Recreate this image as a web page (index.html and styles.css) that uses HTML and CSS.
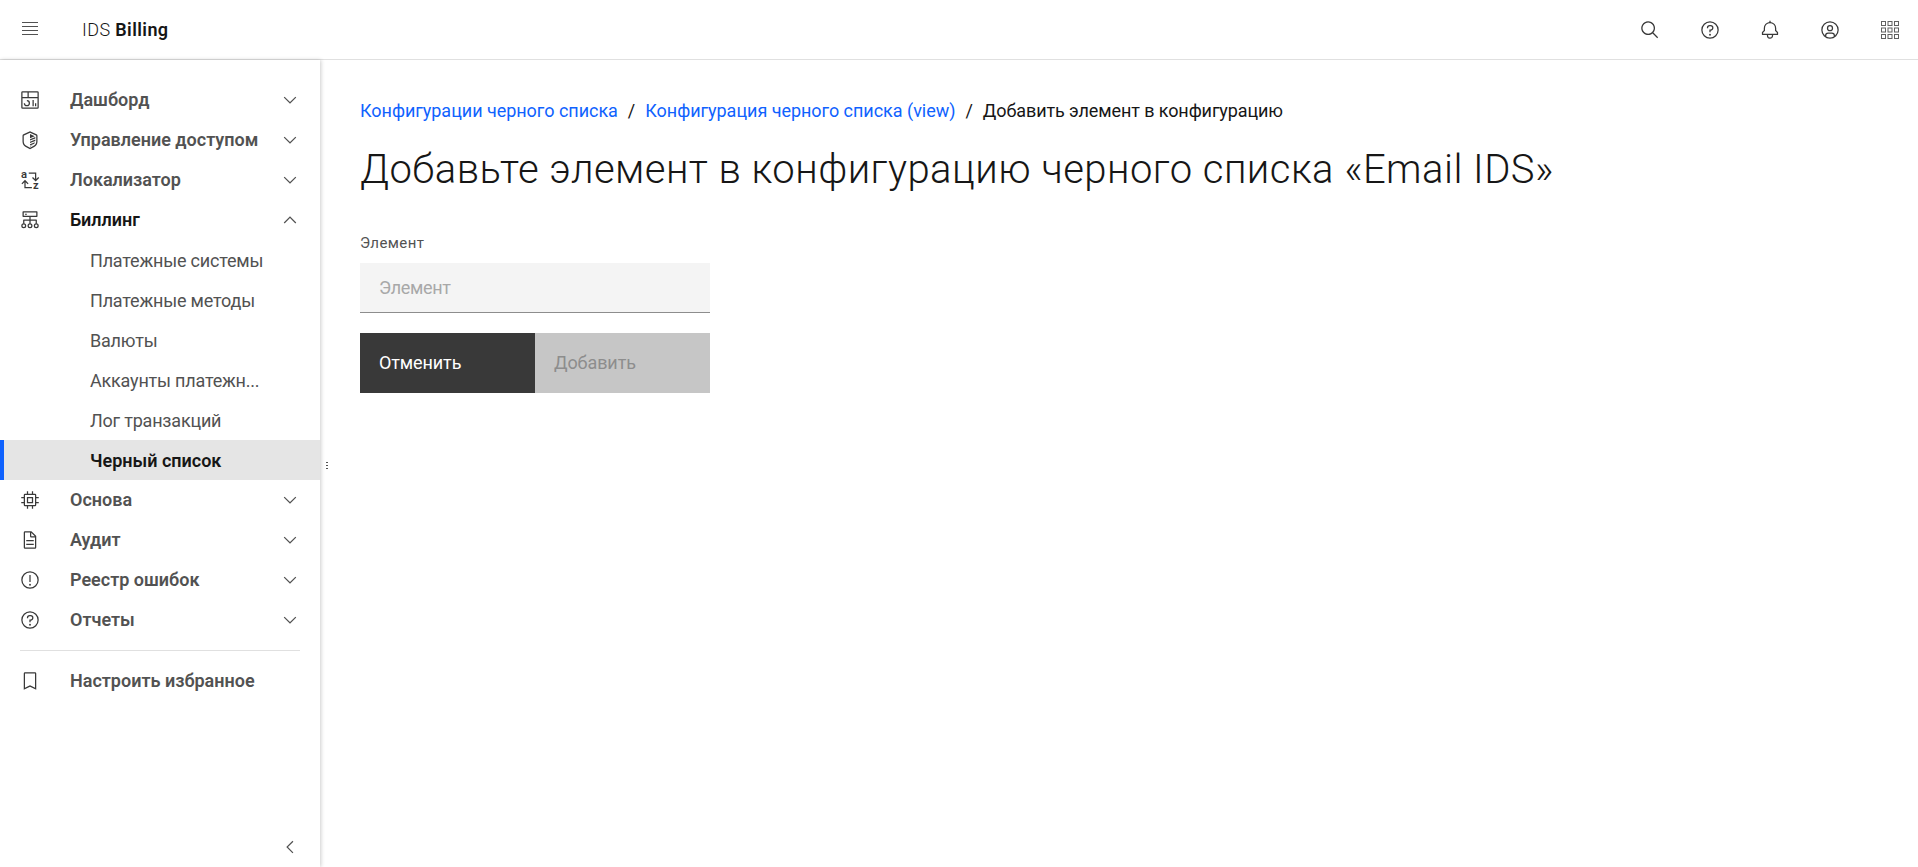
FILE: index.html
```html
<!DOCTYPE html>
<html lang="en">
<head>
    <meta charset="UTF-8">
    <meta name="viewport" content="width=device-width, initial-scale=1.0">
    <title>IDS Billing</title>
    <link rel="stylesheet" href="styles.css">
</head>
<body>
    <!-- Top bar -->
    <header class="topbar">
        <button class="icon-btn menu-btn">
            <svg viewBox="0 0 32 32" class="icon icon-muted"><path d="M3.2 3.200h25.600v1.600H3.200zM3.200 9.600h25.600v1.600H3.200zM3.200 16h25.600v1.600H3.200zM3.200 22.400h25.600V24H3.200z"/></svg>
        </button>
        <div class="logo">IDS <b>Billing</b></div>
        <div class="topbar-actions">
            <button class="icon-btn"><svg viewBox="0 0 32 32" class="icon"><path d="M29,27.5859l-7.5521-7.5521a11.0177,11.0177,0,1,0-1.4141,1.4141L27.5859,29ZM4,13a9,9,0,1,1,9,9A9.01,9.01,0,0,1,4,13Z"/></svg></button>
            <button class="icon-btn"><svg viewBox="0 0 32 32" class="icon"><path d="M16,2A14,14,0,1,0,30,16,14,14,0,0,0,16,2Zm0,26A12,12,0,1,1,28,16,12,12,0,0,1,16,28Z"/><circle cx="16" cy="23.5" r="1.5"/><path d="M17,8H15.5A4.49,4.49,0,0,0,11,12.5V13h2v-.5A2.5,2.5,0,0,1,15.5,10H17a2.5,2.5,0,0,1,0,5H15v4.5h2V17a4.5,4.5,0,0,0,0-9Z"/></svg></button>
            <button class="icon-btn"><svg viewBox="0 0 32 32" class="icon"><path d="M28.7071,19.293,26,16.5859V13a10.0136,10.0136,0,0,0-9-9.9492V1H15V3.0508A10.0136,10.0136,0,0,0,6,13v3.5859L3.2929,19.293A1,1,0,0,0,3,20v3a1,1,0,0,0,1,1h7v.7768a5.152,5.152,0,0,0,4.5,5.1987A5.0057,5.0057,0,0,0,21,25V24h7a1,1,0,0,0,1-1V20A1,1,0,0,0,28.7071,19.293ZM19,25a3,3,0,0,1-6,0V24h6Zm8-3H5V20.4141L7.707,17.707A1,1,0,0,0,8,17V13a8,8,0,0,1,16,0v4a1,1,0,0,0,.293.707L27,20.4141Z"/></svg></button>
            <button class="icon-btn"><svg viewBox="0 0 32 32" class="icon"><path d="M16,8a5,5,0,1,0,5,5A5,5,0,0,0,16,8Zm0,8a3,3,0,1,1,3-3A3.0034,3.0034,0,0,1,16,16Z"/><path d="M16,2A14,14,0,1,0,30,16,14.0158,14.0158,0,0,0,16,2ZM10,26.3765V25a3.0033,3.0033,0,0,1,3-3h6a3.0033,3.0033,0,0,1,3,3v1.3765a11.8989,11.8989,0,0,1-12,0Zm13.9925-1.4507A5.0016,5.0016,0,0,0,19,20H13a5.0016,5.0016,0,0,0-4.9925,4.9258,12,12,0,1,1,15.985,0Z"/></svg></button>
            <button class="icon-btn"><svg viewBox="0 0 20 20" class="icon switcher"><rect x="1.500" y="1.500" width="4" height="4"/><rect x="8" y="1.500" width="4" height="4"/><rect x="14.500" y="1.500" width="4" height="4"/><rect x="1.500" y="8" width="4" height="4"/><rect x="8" y="8" width="4" height="4"/><rect x="14.500" y="8" width="4" height="4"/><rect x="1.500" y="14.500" width="4" height="4"/><rect x="8" y="14.500" width="4" height="4"/><rect x="14.500" y="14.500" width="4" height="4"/></svg></button>
        </div>
    </header>

    <div class="layout">
        <!-- Side navigation -->
        <aside class="sidebar">
            <nav class="nav">
                <a class="nav-item">
                    <svg viewBox="0 0 32 32" class="icon"><path d="M24 21h2v5h-2zM20 16h2v10h-2zM11 26a5.0059 5.0059 0 01-5-5H8a3 3 0 103-3V16a5 5 0 010 10z"/><path d="M28,2H4A2.002,2.002,0,0,0,2,4V28a2.0023,2.0023,0,0,0,2,2H28a2.0027,2.0027,0,0,0,2-2V4A2.0023,2.0023,0,0,0,28,2Zm0,9H14V4H28ZM12,4v7H4V4ZM4,28V13H28.0007l.0013,15Z"/></svg>
                    <span class="nav-label">Дашборд</span>
                    <svg viewBox="0 0 32 32" class="chevron"><path d="M16 22L6 12l1.4-1.4 8.6 8.6 8.6-8.6L26 12z"/></svg>
                </a>
                <a class="nav-item">
                    <svg viewBox="0 0 32 32" class="icon"><path d="M16 30.600l-6.800-3.600C5.800 25.200 4 22 4 18.200V9c0-1 .6-1.800 1.500-2.200L16 2l10.500 4.800c.9.4 1.500 1.200 1.500 2.200v9.200c0 3.800-1.800 7-5.200 8.800zM16 4.200L6.400 8.600c-.3.100-.4.300-.4.500v9.100c0 3 1.400 5.600 4.200 7L16 28.300l5.800-3.100c2.800-1.400 4.200-4 4.200-7V9.100c0-.2-.1-.4-.4-.5z"/><path d="M16 6.500l7.500 3.400-7.500 3.100zM16 14.800l8.500-3.500v2.100L16 16.900zM16 18.800l8.500-3.500v2.100L16 20.900zM16 22.800l7.800-3.200-.9 2.300-6.900 2.900zM16 26l4.500-1.900L16 26.800z"/></svg>
                    <span class="nav-label">Управление доступом</span>
                    <svg viewBox="0 0 32 32" class="chevron"><path d="M16 22L6 12l1.4-1.4 8.6 8.6 8.6-8.6L26 12z"/></svg>
                </a>
                <a class="nav-item">
                    <svg viewBox="0 0 32 32" class="icon icon-locale"><text x="1.600" y="13" class="icon-letter">a</text><text x="20.800" y="30.400" class="icon-letter">z</text><path d="M14 4h12v10.500l3.300-3.300 1.400 1.400L25 18.300l-5.700-5.700 1.400-1.400 3.300 3.300V6H14zM19 29H7V19.500l-3.300 3.300-1.400-1.400L8 15.700l5.700 5.700-1.400 1.400L9 19.500V27h10z"/></svg>
                    <span class="nav-label">Локализатор</span>
                    <svg viewBox="0 0 32 32" class="chevron"><path d="M16 22L6 12l1.4-1.4 8.6 8.6 8.6-8.6L26 12z"/></svg>
                </a>
                <a class="nav-item nav-open">
                    <svg viewBox="0 0 32 32" class="icon"><path d="M5 2h22a1 1 0 0 1 1 1v7a1 1 0 0 1-1 1H17v4h9a1 1 0 0 1 1 1v6h-2v-5h-8v5h-2v-5H7v5H5v-6a1 1 0 0 1 1-1h9v-4H5a1 1 0 0 1-1-1V3a1 1 0 0 1 1-1zm1 2v5h20V4zM8 6h3v1.500H8z" fill-rule="evenodd"/><path d="M6 21a4 4 0 1 1 0 8 4 4 0 0 1 0-8zm0 2a2 2 0 1 0 0 4 2 2 0 0 0 0-4zM16 21a4 4 0 1 1 0 8 4 4 0 0 1 0-8zm0 2a2 2 0 1 0 0 4 2 2 0 0 0 0-4zM26 21a4 4 0 1 1 0 8 4 4 0 0 1 0-8zm0 2a2 2 0 1 0 0 4 2 2 0 0 0 0-4z"/></svg>
                    <span class="nav-label">Биллинг</span>
                    <svg viewBox="0 0 32 32" class="chevron"><path d="M16 10l10 10-1.400 1.400L16 12.800l-8.600 8.600L6 20z"/></svg>
                </a>
                <a class="nav-sub">Платежные системы</a>
                <a class="nav-sub">Платежные методы</a>
                <a class="nav-sub">Валюты</a>
                <a class="nav-sub">Аккаунты платежн...</a>
                <a class="nav-sub">Лог транзакций</a>
                <a class="nav-sub nav-active">Черный список</a>
                <a class="nav-item">
                    <svg viewBox="0 0 32 32" class="icon"><path d="M11,11V21H21V11Zm8,8H13V13h6Z"/><path d="M30,13V11H26V8a2,2,0,0,0-2-2H21V2H19V6H13V2H11V6H8A2,2,0,0,0,6,8v3H2v2H6v6H2v2H6v3a2,2,0,0,0,2,2h3v4h2V26h6v4h2V26h3a2,2,0,0,0,2-2V21h4V19H26V13ZM24,24H8V8H24Z"/></svg>
                    <span class="nav-label">Основа</span>
                    <svg viewBox="0 0 32 32" class="chevron"><path d="M16 22L6 12l1.4-1.4 8.6 8.6 8.6-8.6L26 12z"/></svg>
                </a>
                <a class="nav-item">
                    <svg viewBox="0 0 32 32" class="icon"><path d="M25.7,9.3l-7-7A.9087.9087,0,0,0,18,2H8A2.0058,2.0058,0,0,0,6,4V28a2.0058,2.0058,0,0,0,2,2H24a2.0058,2.0058,0,0,0,2-2V10A.9092.9092,0,0,0,25.7,9.3ZM18,4.4,23.6,10H18ZM24,28H8V4h8v6a2.0058,2.0058,0,0,0,2,2h6Z"/><path d="M10 22H22V24H10zM10 16H22V18H10z"/></svg>
                    <span class="nav-label">Аудит</span>
                    <svg viewBox="0 0 32 32" class="chevron"><path d="M16 22L6 12l1.4-1.4 8.6 8.6 8.6-8.6L26 12z"/></svg>
                </a>
                <a class="nav-item">
                    <svg viewBox="0 0 32 32" class="icon"><path d="M16,2A14,14,0,1,0,30,16,14,14,0,0,0,16,2Zm0,26A12,12,0,1,1,28,16,12,12,0,0,1,16,28Z"/><path d="M15 8H17V19H15z"/><path d="M16,22a1.5,1.5,0,1,0,1.5,1.5A1.5,1.5,0,0,0,16,22Z"/></svg>
                    <span class="nav-label">Реестр ошибок</span>
                    <svg viewBox="0 0 32 32" class="chevron"><path d="M16 22L6 12l1.4-1.4 8.6 8.6 8.6-8.6L26 12z"/></svg>
                </a>
                <a class="nav-item">
                    <svg viewBox="0 0 32 32" class="icon"><path d="M16,2A14,14,0,1,0,30,16,14,14,0,0,0,16,2Zm0,26A12,12,0,1,1,28,16,12,12,0,0,1,16,28Z"/><circle cx="16" cy="23.5" r="1.5"/><path d="M17,8H15.5A4.49,4.49,0,0,0,11,12.5V13h2v-.5A2.5,2.5,0,0,1,15.5,10H17a2.5,2.5,0,0,1,0,5H15v4.5h2V17a4.5,4.5,0,0,0,0-9Z"/></svg>
                    <span class="nav-label">Отчеты</span>
                    <svg viewBox="0 0 32 32" class="chevron"><path d="M16 22L6 12l1.4-1.4 8.6 8.6 8.6-8.6L26 12z"/></svg>
                </a>
                <div class="nav-divider"></div>
                <a class="nav-item">
                    <svg viewBox="0 0 32 32" class="icon"><path d="M24,4V26.75l-7.1-3.59-.9-.45-.9.45L8,26.75V4H24m0-2H8A2,2,0,0,0,6,4V30l10-5,10,5V4a2,2,0,0,0-2-2Z"/></svg>
                    <span class="nav-label">Настроить избранное</span>
                </a>
            </nav>
            <button class="collapse-btn">
                <svg viewBox="0 0 32 32" class="chevron"><path d="M10 16L20 6l1.400 1.400L12.800 16l8.600 8.600L20 26z"/></svg>
            </button>
            <span class="resize-handle"></span>
        </aside>

        <!-- Main content -->
        <main class="content">
            <div class="breadcrumb">
                <a>Конфигурации черного списка</a>
                <span class="crumb-sep">/</span>
                <a>Конфигурация черного списка (view)</a>
                <span class="crumb-sep">/</span>
                <span class="crumb-current">Добавить элемент в конфигурацию</span>
            </div>
            <h1>Добавьте элемент в конфигурацию черного списка «Email IDS»</h1>
            <form class="form">
                <label class="field-label" for="element">Элемент</label>
                <input class="field-input" id="element" type="text" placeholder="Элемент">
                <div class="form-buttons">
                    <button type="button" class="btn btn-cancel"><span class="btn-text">Отменить</span></button>
                    <button type="button" class="btn btn-add" disabled><span class="btn-text">Добавить</span></button>
                </div>
            </form>
        </main>
    </div>
</body>
</html>
```

FILE: styles.css
```css
* {
    box-sizing: border-box;
}

body {
    font-family: "Roboto", "Noto Sans", sans-serif;
    margin: 0;
    padding: 0;
    background-color: #fff;
    color: #161616;
}

button {
    font-family: inherit;
    border: none;
    background: none;
    padding: 0;
}

/* Top bar */
.topbar {
    height: 60px;
    display: flex;
    align-items: center;
    border-bottom: 1px solid #e0e0e0;
    padding-left: 20px;
    padding-right: 8px;
}

.icon-btn {
    width: 20px;
    height: 20px;
    display: block;
}

.menu-btn {
    margin-right: 42px;
}

.logo {
    font-size: 18px;
    font-weight: 300;
    letter-spacing: 0.4px;
    color: #161616;
}

.logo b {
    font-weight: 600;
}

.topbar-actions {
    margin-left: auto;
    display: flex;
    gap: 40px;
    padding-right: 10px;
}

.icon {
    width: 20px;
    height: 20px;
    fill: #393939;
    flex-shrink: 0;
    display: block;
}

.icon-muted {
    fill: #525252;
}

.icon-locale {
    overflow: visible;
}

.switcher {
    fill: none;
    stroke: #616161;
}

.icon-letter {
    font-size: 18px;
    font-family: "Roboto", sans-serif;
}

.chevron {
    width: 20px;
    height: 20px;
    fill: #525252;
    flex-shrink: 0;
    display: block;
}

.layout {
    display: flex;
    height: 807px;
}

/* Side navigation */
.sidebar {
    position: relative;
    width: 320px;
    flex-shrink: 0;
    display: flex;
    flex-direction: column;
    box-shadow: 1px 0 4px rgba(0, 0, 0, 0.2);
    padding-top: 20px;
}

.nav {
    display: flex;
    flex-direction: column;
}

.nav-item {
    height: 40px;
    display: flex;
    align-items: center;
    padding: 0 20px;
    color: #525252;
    font-size: 18px;
    font-weight: 600;
}

.nav-label {
    margin-left: 30px;
    padding-bottom: 2px;
    flex: 1;
}

.nav-open {
    color: #161616;
}

.nav-sub {
    height: 40px;
    display: flex;
    align-items: center;
    padding-left: 90px;
    color: #525252;
    font-size: 18px;
    letter-spacing: -0.2px;
}

.nav-active {
    background-color: #e5e5e5;
    border-left: 4px solid #0f62fe;
    padding-left: 86px;
    color: #161616;
    font-weight: 600;
    letter-spacing: 0;
}

.nav-divider {
    height: 1px;
    background-color: #e0e0e0;
    margin: 10px 20px 10px;
}

.collapse-btn {
    margin-top: auto;
    margin-bottom: 10px;
    margin-left: 280px;
    width: 20px;
    height: 20px;
}

.resize-handle {
    position: absolute;
    left: 326px;
    top: 401px;
    width: 2px;
    height: 8px;
    background-image: radial-gradient(circle, #525252 0.8px, transparent 1px);
    background-size: 2px 3px;
}

/* Main content */
.content {
    flex: 1;
    padding: 41px 40px 40px;
}

.breadcrumb {
    display: flex;
    font-size: 18px;
    letter-spacing: -0.03px;
    line-height: 20px;
    color: #161616;
}

.breadcrumb a {
    color: #0f62fe;
}

.crumb-sep {
    margin: 0 10px;
}

.crumb-current {
    letter-spacing: -0.1px;
}

h1 {
    font-size: 40px;
    font-weight: 300;
    letter-spacing: 0.46px;
    line-height: 50px;
    margin: 24px 0 0;
}

.form {
    width: 350px;
    margin-top: 40px;
}

.field-label {
    display: block;
    font-size: 15px;
    letter-spacing: 0.4px;
    line-height: 16px;
    color: #525252;
    margin-bottom: 12px;
}

.field-input {
    display: block;
    width: 100%;
    height: 50px;
    border: none;
    border-bottom: 1px solid #8d8d8d;
    background-color: #f4f4f4;
    padding: 0 19px;
    font-family: inherit;
    font-size: 18px;
    letter-spacing: -0.3px;
    outline: none;
}

.field-input::placeholder {
    color: #a8a8a8;
}

.form-buttons {
    display: flex;
    margin-top: 20px;
}

.btn {
    flex: 1;
    height: 60px;
    text-align: left;
    padding: 0 19px 2px;
    font-size: 18px;
    letter-spacing: -0.1px;
}

.btn-cancel {
    background-color: #393939;
    color: #fff;
}

.btn-add {
    background-color: #c6c6c6;
    color: #8d8d8d;
}
```
